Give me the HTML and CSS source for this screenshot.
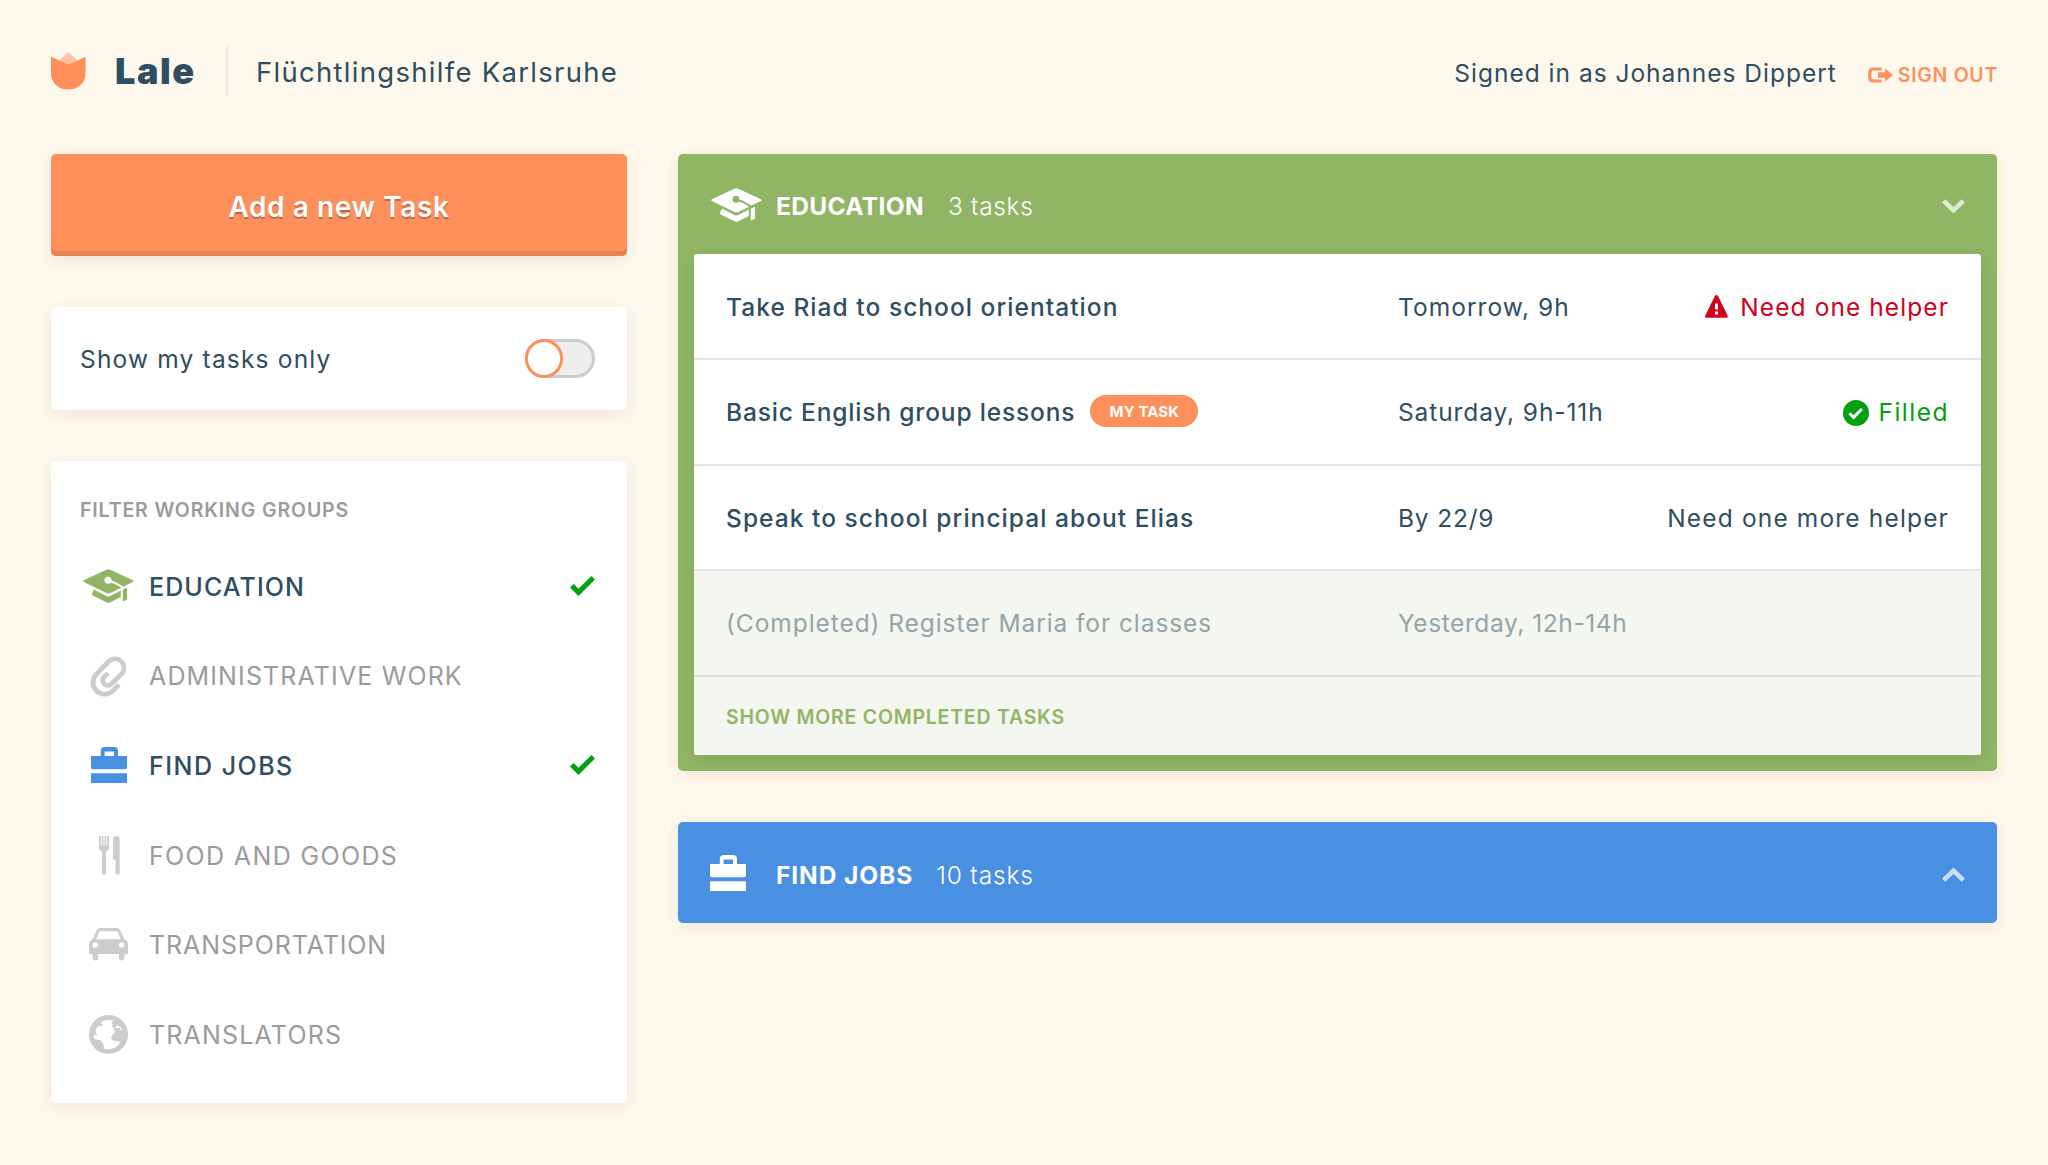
FILE: index.html
```html
<!DOCTYPE html>
<html lang="en">
<head>
<meta charset="utf-8">
<title>Lale – Flüchtlingshilfe Karlsruhe</title>
<link rel="stylesheet" href="styles.css">
</head>
<body>
<svg class="sprite" aria-hidden="true">
  <symbol id="cap" viewBox="0 0 51 34">
    <path d="M23.3.7Q25.4-.3 27.4.7L49.8 11.3Q51.4 12.2 49.8 13L27.4 23.9Q25.4 24.8 23.3 23.9L.9 13Q-.6 12.2.9 11.3Z" fill="currentColor"/>
    <circle cx="25" cy="11.2" r="3.5" class="hole-fill"/>
    <path d="M25 11.6L31 13.4L42 19.6" fill="none" class="hole-stroke" stroke-width="2.2"/>
    <path d="M11 20.6L23.4 27Q25.4 28 27.4 27L37.8 21.6V28L27.4 33.2Q25.4 34.3 23.4 33.2L9.8 26.6Q8.8 26 9 25Z" fill="currentColor"/>
    <path d="M39.8 20.8L44 18.8V30.2Q44 31 43.2 31.3L39.8 32.6Z" fill="currentColor"/>
  </symbol>
  <symbol id="clip" viewBox="0 0 37 42">
    <path d="M29 29.8L22.3 36.3A11.7 11.7 0 0 1 5.8 19.8L19.6 5.6A9.1 9.1 0 0 1 32.4 18.2L21.3 28.9A5 5 0 0 1 14.1 21.9L18 18.2" fill="none" stroke="currentColor" stroke-width="4.8"/>
  </symbol>
  <symbol id="case" viewBox="0 0 36 36">
    <path fill-rule="evenodd" d="M0 9H9.8V4Q9.8 0 13.8 0H23Q27 0 27 4V9H36V20.3Q36 22.3 34 22.3H2Q0 22.3 0 20.3ZM13.6 4.4V9H23V4.4ZM0 26.3H36V36H0Z" fill="currentColor"/>
  </symbol>
  <symbol id="fork" viewBox="0 0 21 39">
    <path d="M0 0H1.6V9.6H2.8V0H4.4V9.6H5.6V0H7.2V9.6H8.4V0H10V12.5Q10 14.6 7 15.2V37Q7 38.5 5 38.5T3 37V15.2Q0 14.6 0 12.5ZM14 23V4Q14 0 17.4 0T20.7 4V37Q20.7 38.5 18.6 38.5T16.4 37V23.6H14.6Z" fill="currentColor"/>
  </symbol>
  <symbol id="car" viewBox="0 0 39 33">
    <path fill-rule="evenodd" d="M3.6 11.4L7.8 2.2Q8.8 0 11.2 0H27.8Q30.2 0 31.2 2.2L35.4 11.4Q39 13 39 17V26H35.4V29.8Q35.4 32.5 32.7 32.5T30 29.8V26H9V29.8Q9 32.5 6.3 32.5T3.6 29.8V26H0V17Q0 13 3.6 11.4ZM7.2 11.3H31.8L28.6 3.2H10.4ZM6.3 14.2a2.8 2.8 0 1 0 .01 0ZM32.7 14.2a2.8 2.8 0 1 0 .01 0Z" fill="currentColor"/>
  </symbol>
  <symbol id="globe" viewBox="0 0 39 39">
    <circle cx="19.5" cy="19.5" r="19.5" fill="currentColor"/>
    <path class="hole-fill" d="M13 6.2Q19 4.2 24.5 5.6L22.4 8L24 9.6L22.8 11.4L25.6 13.2L24.6 15.8L26.2 17Q22 20 22.2 23.5Q23.4 26 27 26.3L31.4 26.6Q29.5 31.5 24 33.4Q19 34.8 14.8 33.6Q15.2 29.6 13.6 27.4Q11.6 24.8 8.6 24.6L5.8 24.4Q4.6 22 4.8 19.4L8.6 20.4L6.6 17.2Q6.4 14.8 8.4 11.6L11.6 11.2Q13.8 10.4 14.2 9L11.6 8.4Z"/>
    <path class="hole-fill" d="M26.6 12.4L27.6 10.6Q31.8 11.4 33.4 15.4L31.4 14.6L30.6 12.8L28.4 13.4Z"/>
  </symbol>
  <symbol id="check" viewBox="0 0 25 20">
    <path d="M0 11.5L3.7 7.9L8.5 12.8L21.5 0L25 3.4L8.5 20Z" fill="currentColor"/>
  </symbol>
  <symbol id="chevron" viewBox="0 0 23 15">
    <path d="M0 3.5L3.3.2L11.5 8L19.7.2L23 3.5L11.5 14.6Z" fill="currentColor"/>
  </symbol>
  <symbol id="leave" viewBox="0 0 25 16">
    <path d="M13.5 2H5.5Q1.8 2 1.8 5.5V10.5Q1.8 14 5.5 14H13.5" fill="none" stroke="currentColor" stroke-width="3.2"/>
    <path d="M10 5.2H17.2V1.6L25 8L17.2 14.4V10.8H10Z" fill="currentColor"/>
  </symbol>
  <symbol id="warn" viewBox="0 0 23 23">
    <path fill-rule="evenodd" d="M10 .8Q11.4-.6 12.9.8L22.6 20.6Q23.4 22.8 21.6 22.8H1.3Q-.5 22.8.3 20.6ZM10 8.4V14.4H13V8.4ZM10 16.6V19.6H13V16.6Z" fill="currentColor"/>
  </symbol>
  <symbol id="done" viewBox="0 0 26 26">
    <circle cx="13" cy="13" r="13" fill="currentColor"/>
    <path d="M6.4 13.2L10.6 17.4L18.9 9" fill="none" stroke="#fff" stroke-width="3"/>
  </symbol>
</svg>

<header class="topbar">
  <svg class="logo" viewBox="0 0 35 38" aria-hidden="true">
    <path d="M17.5 0L26.7 8.8L17.5 13L8.3 8.8Z" fill="#ffc3a3"/>
    <path d="M0 4.8L17.5 12.6L34.6 4.8V21.5C34.6 31 27 37.6 17.4 37.6S0 31 0 21.5Z" fill="#ff8f5b"/>
  </svg>
  <span class="brand">Lale</span>
  <span class="org">Flüchtlingshilfe Karlsruhe</span>
  <span class="user">Signed in as Johannes Dippert</span>
  <a class="sign-out"><svg width="25" height="16"><use href="#leave"/></svg><span>SIGN OUT</span></a>
</header>

<main class="columns">
  <aside class="sidebar">
    <button class="add">Add a new Task</button>

    <section class="card mine">
      <span>Show my tasks only</span>
      <span class="toggle"><i class="knob"></i></span>
    </section>

    <section class="card filter">
      <h2>FILTER WORKING GROUPS</h2>
      <ul class="groups">
        <li class="on"><span class="ico green"><svg width="51" height="34"><use href="#cap"/></svg></span><span class="edu">EDUCATION</span><svg class="tick" width="25" height="20"><use href="#check"/></svg></li>
        <li><span class="ico"><svg width="37" height="42"><use href="#clip"/></svg></span><span class="admin">ADMINISTRATIVE WORK</span></li>
        <li class="on"><span class="ico blue"><svg width="36" height="36"><use href="#case"/></svg></span><span class="jobs">FIND JOBS</span><svg class="tick" width="25" height="20"><use href="#check"/></svg></li>
        <li><span class="ico fork"><svg width="21" height="39"><use href="#fork"/></svg></span><span class="food">FOOD AND GOODS</span></li>
        <li><span class="ico"><svg width="39" height="33"><use href="#car"/></svg></span><span class="transport">TRANSPORTATION</span></li>
        <li><span class="ico"><svg width="39" height="39"><use href="#globe"/></svg></span><span class="translators">TRANSLATORS</span></li>
      </ul>
    </section>
  </aside>

  <div class="boards">
    <section class="board education">
      <header class="board-head">
        <span class="board-icon"><svg width="51" height="34"><use href="#cap"/></svg></span>
        <h3>EDUCATION</h3><span class="count">3 tasks</span>
        <svg class="chev" width="23" height="15"><use href="#chevron"/></svg>
      </header>
      <div class="tasks">
        <div class="task riad"><span class="title">Take Riad to school orientation</span><span class="when">Tomorrow, 9h</span><span class="status need"><svg width="23" height="23"><use href="#warn"/></svg>Need one helper</span></div>
        <div class="task english"><span class="title">Basic English group lessons<b class="badge">MY TASK</b></span><span class="when">Saturday, 9h-11h</span><span class="status filled"><svg width="26" height="26"><use href="#done"/></svg>Filled</span></div>
        <div class="task elias"><span class="title">Speak to school principal about Elias</span><span class="when">By 22/9</span><span class="status">Need one more helper</span></div>
        <div class="task completed"><span class="title">(Completed) Register Maria for classes</span><span class="when">Yesterday, 12h-14h</span></div>
        <a class="more">SHOW MORE COMPLETED TASKS</a>
      </div>
    </section>

    <section class="board find-jobs">
      <header class="board-head">
        <span class="board-icon"><svg width="36" height="36"><use href="#case"/></svg></span>
        <h3>FIND JOBS</h3><span class="count">10 tasks</span>
        <svg class="chev up" width="23" height="15"><use href="#chevron"/></svg>
      </header>
    </section>
  </div>
</main>
</body>
</html>
```
FILE: styles.css
```css
* { box-sizing: border-box; }

body {
  --hole: #fff;
  min-height: 1165px;
  margin: 0;
  padding: 0 51px;
  background: #fff8ec;
  color: #2e4e61;
  font: 400 24.5px/32px Inter, "Liberation Sans", sans-serif;
  white-space: nowrap;
}

h2, h3, ul { margin: 0; padding: 0; list-style: none; }
svg { display: block; flex: none; }
.sprite { width: 0; height: 0; position: absolute; }
.hole-fill { fill: var(--hole); }
.hole-stroke { stroke: var(--hole); }

/* Top bar */
.topbar { display: flex; align-items: center; height: 142px; }
.logo { width: 35px; height: 38px; }
.brand { margin-left: 29px; font-size: 36px; font-weight: 900; letter-spacing: 1.6px; width: 111px; }
.org {
  display: flex; align-items: center; height: 50px;
  margin-top: -1px; padding: 3px 0 0 28px;
  border-left: 2px solid #f2e9dc;
  font-size: 27.5px; letter-spacing: 1.29px;
}
.user { margin-left: auto; padding-top: 3px; letter-spacing: .99px; }
.sign-out {
  display: flex; align-items: center; gap: 5px;
  margin: 0 -1px 0 31px; padding-top: 7px;
  color: #ff8f5b; font-size: 19.5px; font-weight: 600; letter-spacing: .7px;
}

/* Page columns */
.columns { display: grid; grid-template-columns: 576px 1319px; gap: 51px; padding-top: 12px; align-items: start; }
.sidebar, .boards { display: flex; flex-direction: column; gap: 51px; }
.card, .add, .board { border-radius: 5px; box-shadow: 0 4px 16px rgba(60, 50, 20, .09); }
.card { background: #fff; }

.add {
  height: 102px; padding: 3px 0 0; border: 0;
  background: #ff8f5b; color: #fff;
  font: 600 28px/32px Inter, "Liberation Sans", sans-serif; letter-spacing: .6px;
  text-shadow: 0 2px 0 #c8683d;
  box-shadow: inset 0 -5px 0 #e68152, 0 4px 16px rgba(60, 50, 20, .09);
}

.mine { display: flex; align-items: center; justify-content: space-between; height: 103px; padding: 0 32px 0 29px; letter-spacing: 1.18px; }
.toggle { width: 70px; height: 39px; border-radius: 20px; background: #eee; box-shadow: inset 0 0 0 3px #ccc; }
.knob { display: block; width: 38px; height: 39px; border: 3px solid #ff8f5b; border-radius: 20px; background: #fff; }

.filter { padding: 37px 32px 23px 29px; }
.filter h2 { margin-bottom: 20px; color: #9b9b9b; font-size: 19.5px; font-weight: 600; line-height: 24px; letter-spacing: .86px; }
.groups li { display: flex; align-items: center; height: 89.6px; color: #9b9b9b; font-size: 25px; }
.groups .on { color: #2e4e61; font-weight: 500; }
.ico { display: flex; justify-content: center; width: 53px; margin: 0 14px 0 2px; color: #ccc; }
.ico svg { margin-top: -1px; }
.fork { padding-left: 2px; }
.green { color: #90b565; }
.blue { color: #4990e2; }
.tick { margin: -1px 0 0 auto; color: #00a011; }
.edu { letter-spacing: 1.1px; }
.admin { letter-spacing: 1.13px; }
.jobs { letter-spacing: 1.5px; }
.food { letter-spacing: 1.36px; }
.transport { letter-spacing: .9px; }
.translators { letter-spacing: 1.18px; }

/* Boards */
.education { --hole: #90b565; height: 617px; padding: 0 16px; background: #90b565; }
.find-jobs { height: 101px; padding: 0 16px; background: #4990e2; }
.board-head { display: flex; align-items: center; height: 100px; padding: 4px 16px 0 17px; color: #fff; }
.board-icon { width: 65px; margin-top: -2px; }
.board-head h3 { font-size: 24.5px; font-weight: 700; letter-spacing: .35px; }
.find-jobs .board-head { padding-top: 5px; }
.find-jobs h3 { letter-spacing: .92px; }
.find-jobs .board-icon { margin: -3px 1px 0 -1px; }
.count { margin-left: 24px; font-weight: 300; letter-spacing: .65px; }
.find-jobs .count { margin-left: 23px; letter-spacing: .85px; }
.chev { margin: 1px 0 0 auto; opacity: .7; }
.up { transform: rotate(180deg); margin-top: 0; }

.tasks { --hole: #fff; border-radius: 3px; background: #fff; box-shadow: 0 4px 16px rgba(0, 0, 0, .08); }
.task {
  display: grid; grid-template-columns: 672px 1fr auto; align-items: center;
  height: 106px; padding: 1px 32px 0 32px; border-bottom: 2px solid #e5e5e5;
}
.title { display: flex; align-items: center; font-weight: 500; letter-spacing: 1.05px; }
.english .title { letter-spacing: .84px; }
.english { padding-top: 0; }
.elias { height: 105px; }
.badge {
  width: 108px; height: 32px; margin: -2px 0 0 15px; padding-top: 1px;
  border-radius: 16px; background: #ff8f5b; color: #fff;
  font-size: 15px; font-weight: 700; line-height: 31px; letter-spacing: .1px; text-align: center;
}
.when { letter-spacing: 1.05px; }
.english .when { letter-spacing: .9px; }
.elias .when { letter-spacing: .82px; }
.completed .when { letter-spacing: .58px; }
.status { display: flex; align-items: center; letter-spacing: 1.16px; }
.status svg { margin: 0 12px 0 0; }
.status.need { color: #d0021b; letter-spacing: 1.08px; }
.status.filled { color: #00a011; letter-spacing: 1.5px; }
.status.filled svg { margin: 1px 9px 0 0; }
.completed { padding-top: 0; background: #f4f7ef; border-bottom-color: #dde0d8; color: #93a5ab; }
.completed .title { font-weight: 400; letter-spacing: .93px; }
.more {
  display: flex; align-items: center; height: 78px; padding: 1px 31px 0 32px;
  border-radius: 0 0 3px 3px; background: #f4f7ef; color: #90b565;
  font-size: 19.5px; font-weight: 600; letter-spacing: .77px;
}
```
